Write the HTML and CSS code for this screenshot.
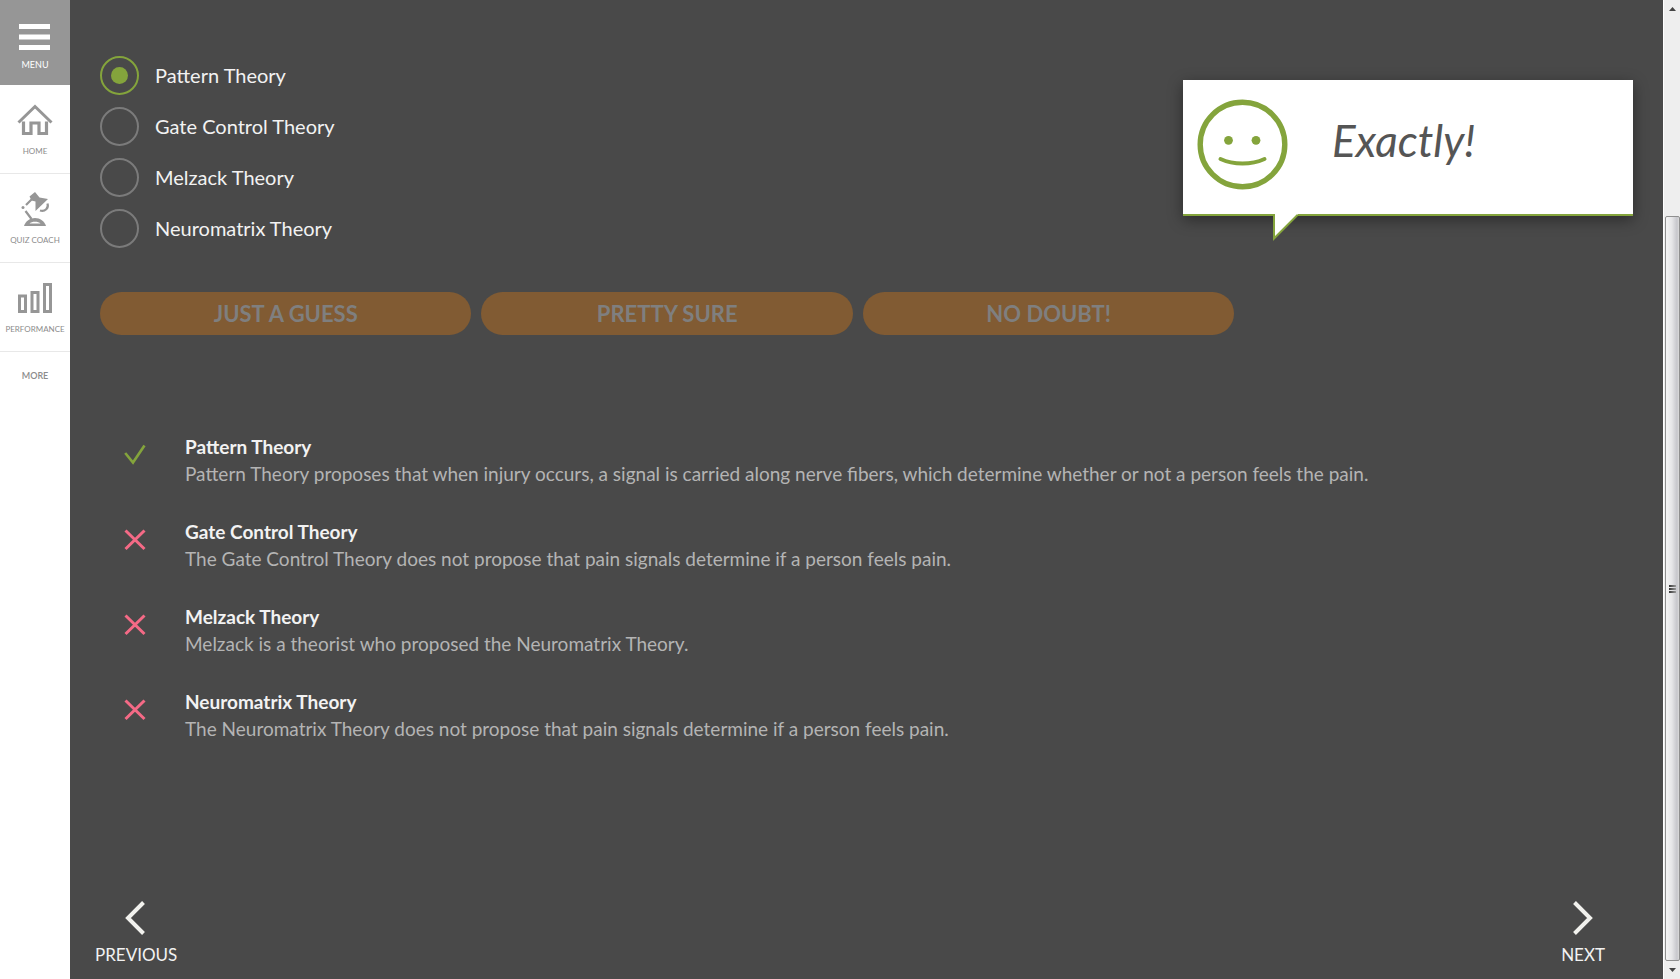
FILE: index.html
```html
<!DOCTYPE html>
<html lang="en">
<head>
<meta charset="utf-8">
<title>Quiz</title>
<link rel="stylesheet" href="styles.css">
</head>
<body>
<div class="app">
  <nav class="sidebar" aria-label="Main">
    <button class="menu-button" type="button">
      <svg width="32" height="27" viewBox="0 0 32 27" aria-hidden="true"><path d="M0 0h31v5H0zM0 10.500h31v5H0zM0 21h31v5H0z" fill="#fff"/></svg>
      <span class="menu-label">MENU</span>
    </button>
    <a class="side-link" href="#home">
      <svg width="36" height="36" viewBox="0 0 36 36" fill="none" stroke="#969696" aria-hidden="true"><path d="M1.500 19.500 18 3.500 34.500 19.500" stroke-width="3"/><path d="M6.500 18.500V30.500H14V20H22V30.500H29.500V18.500" stroke-width="3.200"/></svg>
      <span>HOME</span>
    </a>
    <a class="side-link" href="#coach">
      <svg width="36" height="36" viewBox="0 0 36 36" fill="none" aria-hidden="true"><path d="M12.500 4.500 18 0 22.500 5.500 31 7 18.500 19V9.500L14.500 8.500Z" fill="#969696"/><path d="M16 6 9 13M8.500 19l6 8" stroke="#969696" stroke-width="2.200"/><circle cx="6" cy="15.500" r="1.500" fill="#969696"/><path d="M30.500 11.500c1.500 4.500-2.500 8.500-7.500 7" stroke="#969696" stroke-width="2.200"/><path d="M7 34c1.500-5 6-8 11-8s9.500 3 11 8Z" fill="#969696"/><path d="M12.500 31.500c2-2.500 9-2.500 11 0Z" fill="#fff"/></svg>
      <span>QUIZ COACH</span>
    </a>
    <a class="side-link" href="#performance">
      <svg width="36" height="36" viewBox="0 0 36 36" fill="none" stroke="#969696" stroke-width="3" aria-hidden="true"><path d="M2.500 15h6v15.500h-6zM15 11.500h6v19h-6zM27.500 3.500h6v27h-6z"/></svg>
      <span>PERFORMANCE</span>
    </a>
    <a class="more-link" href="#more">MORE</a>
  </nav>

  <main class="main">
    <section class="top">
      <fieldset class="options" aria-label="Answer">
        <label class="option"><input class="radio" type="radio" name="answer" checked>Pattern Theory</label>
        <label class="option"><input class="radio" type="radio" name="answer">Gate Control Theory</label>
        <label class="option"><input class="radio" type="radio" name="answer">Melzack Theory</label>
        <label class="option"><input class="radio" type="radio" name="answer">Neuromatrix Theory</label>
      </fieldset>
      <aside class="feedback" role="status">
        <svg class="face" width="92" height="92" viewBox="0 0 92 92" fill="none" stroke="#84a43c" aria-hidden="true"><circle cx="45.500" cy="46.500" r="42.300" stroke-width="5.400"/><circle cx="31.500" cy="42.300" r="4.400" fill="#84a43c" stroke="none"/><circle cx="59" cy="42.300" r="4.400" fill="#84a43c" stroke="none"/><path d="M23.500 61c13 6 31 6 44 0" stroke-width="4" stroke-linecap="round"/></svg>
        <span class="feedback-text">Exactly!</span>
        <svg class="tail" width="26" height="27" viewBox="0 0 26 27" aria-hidden="true"><path d="M1 0V24L25 0Z" fill="#fff"/><path d="M1 0V24.500L24.500 1" fill="none" stroke="#84a43c" stroke-width="2"/></svg>
      </aside>
    </section>

    <div class="confidence">
      <button class="pill" type="button" disabled>JUST A GUESS</button>
      <button class="pill" type="button" disabled>PRETTY SURE</button>
      <button class="pill" type="button" disabled>NO DOUBT!</button>
    </div>

    <section class="answers">
      <article class="answer">
        <svg class="mark" width="22" height="22" viewBox="0 0 22 22" fill="none" stroke="#84a43c" stroke-width="2.600" aria-label="Correct"><path d="M1.200 9 9 18.500 20.500 1.500"/></svg>
        <div><h2 class="answer-title">Pattern Theory</h2><p class="answer-text">Pattern Theory proposes that when injury occurs, a signal is carried along nerve fibers, which determine whether or not a person feels the pain.</p></div>
      </article>
      <article class="answer">
        <svg class="mark" width="22" height="22" viewBox="0 0 22 22" fill="none" stroke="#f56a86" stroke-width="3" aria-label="Wrong"><path d="M1.500 1.500 20.500 20M20.500 1.500 1.500 20"/></svg>
        <div><h2 class="answer-title">Gate Control Theory</h2><p class="answer-text">The Gate Control Theory does not propose that pain signals determine if a person feels pain.</p></div>
      </article>
      <article class="answer">
        <svg class="mark" width="22" height="22" viewBox="0 0 22 22" fill="none" stroke="#f56a86" stroke-width="3" aria-label="Wrong"><path d="M1.500 1.500 20.500 20M20.500 1.500 1.500 20"/></svg>
        <div><h2 class="answer-title">Melzack Theory</h2><p class="answer-text">Melzack is a theorist who proposed the Neuromatrix Theory.</p></div>
      </article>
      <article class="answer">
        <svg class="mark" width="22" height="22" viewBox="0 0 22 22" fill="none" stroke="#f56a86" stroke-width="3" aria-label="Wrong"><path d="M1.500 1.500 20.500 20M20.500 1.500 1.500 20"/></svg>
        <div><h2 class="answer-title">Neuromatrix Theory</h2><p class="answer-text">The Neuromatrix Theory does not propose that pain signals determine if a person feels pain.</p></div>
      </article>
    </section>

    <footer class="pager">
      <button class="page-button" type="button">
        <svg width="22" height="34" viewBox="0 0 22 34" fill="none" stroke="#f2f2ee" stroke-width="4" aria-hidden="true"><path d="M18.500 1.500 3 17 18.500 32.500"/></svg>
        PREVIOUS
      </button>
      <button class="page-button" type="button">
        <svg width="22" height="34" viewBox="0 0 22 34" fill="none" stroke="#f2f2ee" stroke-width="4" aria-hidden="true"><path d="M2.500 1.500 18 17 2.500 32.500"/></svg>
        NEXT
      </button>
    </footer>
  </main>

  <div class="scrollbar" aria-hidden="true">
    <svg class="scroll-arrow" width="7" height="4" viewBox="0 0 7 4"><path d="M0 4 3.500 0 7 4Z" fill="#444"/></svg>
    <div class="track"><div class="thumb"><i></i><i></i><i></i></div></div>
    <svg class="scroll-arrow" width="7" height="4" viewBox="0 0 7 4"><path d="M0 0 3.500 4 7 0Z" fill="#444"/></svg>
  </div>
</div>
</body>
</html>
```
FILE: styles.css
```css
* { box-sizing: border-box; }

body {
  margin: 0;
  font-family: Lato, "Open Sans", sans-serif;
  color: #f2f2f2;
  background: #494949;
}

button { font-family: inherit; border: 0; padding: 0; background: none; color: inherit; }
a { text-decoration: none; }
h2, p { margin: 0; }

.app { display: flex; min-height: 100vh; }

/* Sidebar */
.sidebar {
  flex: 0 0 70px;
  display: flex;
  flex-direction: column;
  background: #fff;
}
.menu-button {
  display: flex;
  flex-direction: column;
  align-items: center;
  gap: 8px;
  height: 85px;
  padding-top: 24px;
  background: #969696;
  color: #fff;
  font-size: 9px;
  line-height: 12px;
}
.side-link {
  display: flex;
  flex-direction: column;
  align-items: center;
  gap: 7px;
  height: 89px;
  padding-top: 18px;
  border-bottom: 1px solid #e8e8e8;
  color: #8c8c8c;
  font-size: 8px;
  line-height: 10px;
}
.more-link {
  padding-top: 18px;
  color: #8c8c8c;
  font-size: 9px;
  line-height: 12px;
  font-weight: 600;
  text-align: center;
}

/* Main column */
.main {
  flex: 1;
  min-width: 0;
  display: flex;
  flex-direction: column;
  padding: 56px 30px 14px;
}
.top { display: flex; justify-content: space-between; align-items: flex-start; }

.options {
  display: flex;
  flex-direction: column;
  gap: 12px;
  margin: 0;
  padding: 0;
  border: 0;
}
.option {
  display: flex;
  align-items: center;
  gap: 16px;
  font-size: 20px;
  line-height: 39px;
}
.radio {
  appearance: none;
  display: grid;
  place-items: center;
  width: 39px;
  height: 39px;
  margin: 0;
  border: 2px solid #7b7b7b;
  border-radius: 50%;
}
.radio:checked { border-color: #84a43c; }
.radio:checked::before {
  content: "";
  width: 17px;
  height: 17px;
  border-radius: 50%;
  background: #84a43c;
}

/* Feedback bubble */
.feedback {
  position: relative;
  display: flex;
  align-items: flex-start;
  gap: 43px;
  width: 450px;
  height: 136px;
  margin-top: 24px;
  padding: 18px 14px;
  background: #fff;
  border-bottom: 2px solid #84a43c;
  box-shadow: 0 4px 14px rgba(0, 0, 0, 0.4);
}
.feedback-text {
  padding-top: 14px;
  color: #555;
  font-size: 44px;
  line-height: 56px;
  font-style: italic;
}
.tail { position: absolute; left: 90px; top: 134px; }

/* Confidence buttons */
.confidence {
  display: grid;
  grid-template-columns: repeat(3, 1fr);
  gap: 10px;
  width: 74%;
  margin-top: 44px;
}
.pill {
  height: 43px;
  border-radius: 22px;
  background: #815b33;
  color: #7f7f7f;
  font-size: 22px;
  font-weight: 700;
}

/* Answer explanations */
.answers {
  display: flex;
  flex-direction: column;
  gap: 31px;
  margin-top: 98px;
  padding-left: 24px;
}
.answer { display: flex; align-items: flex-start; gap: 39px; }
.mark { flex: none; margin-top: 11px; }
.answer-title { font-size: 19px; line-height: 27px; font-weight: 700; }
.answer-text { font-size: 19px; line-height: 27px; color: #b4b4b4; }

/* Pager */
.pager {
  display: flex;
  justify-content: space-between;
  margin-top: auto;
  padding-right: 28px;
}
.page-button {
  display: flex;
  flex-direction: column;
  align-items: center;
  gap: 10px;
  margin-left: -5px;
  font-size: 17px;
  line-height: 20px;
}

/* Scrollbar */
.scrollbar {
  flex: 0 0 17px;
  display: flex;
  flex-direction: column;
  align-items: center;
  border-left: 1px solid #fff;
  background: #eee;
}
.scroll-arrow { flex: none; margin: 7px 0; }
.track { flex: 1; display: flex; align-items: flex-end; width: 100%; }
.thumb {
  display: flex;
  flex-direction: column;
  align-items: center;
  justify-content: center;
  gap: 1px;
  width: 15px;
  height: 79%;
  margin-left: 1px;
  border: 1px solid #8f8f8f;
  border-radius: 2px;
  background: linear-gradient(90deg, #f5f5f5, #e6e6e8 45%, #c6c6cb 85%, #dcdcdc);
}
.thumb i { width: 7px; height: 2px; background: linear-gradient(90deg, #333, #999); }
```
